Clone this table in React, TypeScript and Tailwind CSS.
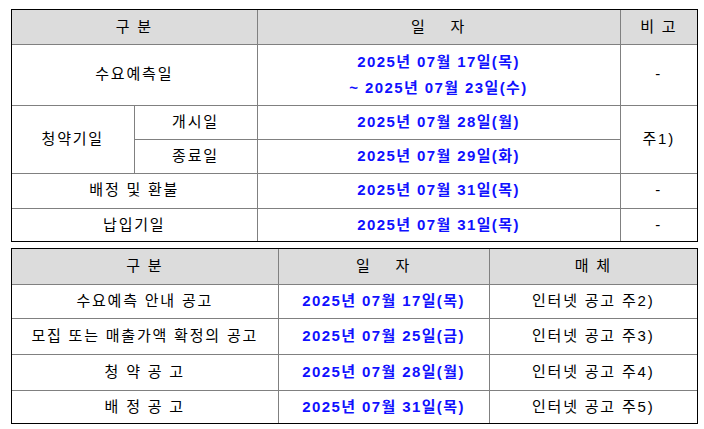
import React from 'react';

const font = { fontFamily: '"Liberation Sans", "Noto Sans CJK KR", sans-serif' };

const td = 'border border-[#808080] text-center align-middle p-0';
const date = 'text-[#1010ff] font-bold tracking-[1.4px]';

function Schedule() {
  return (
    <div className="border border-black w-[687px]">
      <table className="w-full border-collapse border-hidden table-fixed text-[15px] tracking-[1.8px] text-black">
        <colgroup>
          <col className="w-[122px]" />
          <col className="w-[123px]" />
          <col className="w-[363px]" />
          <col />
        </colgroup>
        <tbody>
          <tr className="h-[34px] bg-[#dcdcdc]">
            <td className={td} colSpan={2}>구 분</td>
            <td className={td}>일&nbsp;&nbsp;&nbsp;&nbsp;자</td>
            <td className={td}>비 고</td>
          </tr>
          <tr className="h-[61px]">
            <td className={td} colSpan={2}>수요예측일</td>
            <td className={td}>
              <div className={`${date} leading-[26px]`}>2025년 07월 17일(목)</div>
              <div className={`${date} leading-[26px]`}>~ 2025년 07월 23일(수)</div>
            </td>
            <td className={td}>-</td>
          </tr>
          <tr className="h-[34px]">
            <td className={td} rowSpan={2}>청약기일</td>
            <td className={td}>개시일</td>
            <td className={`${td} ${date}`}>2025년 07월 28일(월)</td>
            <td className={td} rowSpan={2}>주1)</td>
          </tr>
          <tr className="h-[34px]">
            <td className={td}>종료일</td>
            <td className={`${td} ${date}`}>2025년 07월 29일(화)</td>
          </tr>
          <tr className="h-[35px]">
            <td className={td} colSpan={2}>배정 및 환불</td>
            <td className={`${td} ${date}`}>2025년 07월 31일(목)</td>
            <td className={td}>-</td>
          </tr>
          <tr className="h-[33px]">
            <td className={td} colSpan={2}>납입기일</td>
            <td className={`${td} ${date}`}>2025년 07월 31일(목)</td>
            <td className={td}>-</td>
          </tr>
        </tbody>
      </table>
    </div>
  );
}

const notices = [
  { name: '수요예측 안내 공고', date: '2025년 07월 17일(목)', media: '인터넷 공고 주2)', h: 'h-[34px]' },
  { name: '모집 또는 매출가액 확정의 공고', date: '2025년 07월 25일(금)', media: '인터넷 공고 주3)', h: 'h-[36px]' },
  { name: '청 약 공 고', date: '2025년 07월 28일(월)', media: '인터넷 공고 주4)', h: 'h-[36px]' },
  { name: '배 정 공 고', date: '2025년 07월 31일(목)', media: '인터넷 공고 주5)', h: 'h-[33px]' },
];

function Notices() {
  return (
    <div className="border border-black w-[687px]">
      <table className="w-full border-collapse border-hidden table-fixed text-[15px] tracking-[1.8px] text-black">
        <colgroup>
          <col className="w-[266px]" />
          <col className="w-[211px]" />
          <col />
        </colgroup>
        <tbody>
          <tr className="h-[35px] bg-[#dcdcdc]">
            <td className={td}>구 분</td>
            <td className={td}>일&nbsp;&nbsp;&nbsp;&nbsp;자</td>
            <td className={td}>매 체</td>
          </tr>
          {notices.map((n) => (
            <tr key={n.name} className={n.h}>
              <td className={td}>{n.name}</td>
              <td className={`${td} ${date}`}>{n.date}</td>
              <td className={td}>{n.media}</td>
            </tr>
          ))}
        </tbody>
      </table>
    </div>
  );
}

export default function App() {
  return (
    <div className="bg-white w-[704px] h-[429px] pt-[9px] pl-[11px] flex flex-col gap-[6px]" style={font}>
      <Schedule />
      <Notices />
    </div>
  );
}
